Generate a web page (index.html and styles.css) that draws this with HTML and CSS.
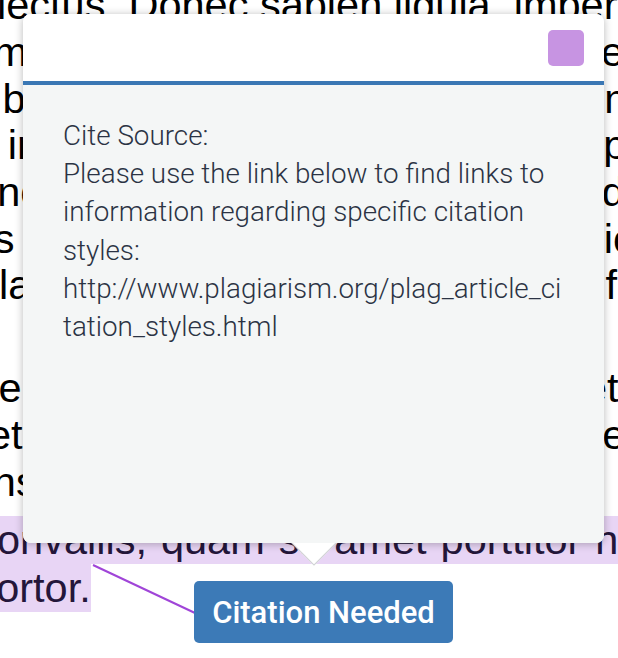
FILE: index.html
```html
<!DOCTYPE html>
<html>
<head>
<meta charset="utf-8">
<link rel="stylesheet" href="styles.css">
</head>
<body>
<div class="doc">
  <div class="ln"><span class="a a0">lectus. Donec sapien ligula, imperdiet</span></div>
  <div class="ln"><span class="a a1">mattis</span><span class="b b1">elit</span></div>
  <div class="ln"><span class="a a2">a bibendum</span><span class="b b2">mi</span></div>
  <div class="ln"><span class="a a3">quis in</span><span class="b b3">purus</span></div>
  <div class="ln"><span class="a a4">tincidunt</span><span class="b b4">dolor</span></div>
  <div class="ln"><span class="a a5">faucibus id</span><span class="b b5">dictum</span></div>
  <div class="ln"><span class="a a6">lacinia</span><span class="b b6">fringilla</span></div>
  <div class="ln gap"></div>
  <div class="ln"><span class="a a8">vitae</span><span class="b b8">et magna</span></div>
  <div class="ln"><span class="a a9">et</span><span class="b b9">eros</span></div>
  <div class="ln"><span class="a a10">consectetur</span></div>
  <div class="ln hl-line first"><span class="a a11 hl">convallis, quam sit amet porttitor nunc</span></div>
  <div class="ln hl-line"><span class="a a12 hl">tortor.</span></div>
</div>

<svg class="connector" width="618" height="658" viewBox="0 0 618 658">
  <line x1="93" y1="565" x2="195" y2="613" stroke="#a045d8" stroke-width="2"/>
</svg>

<button class="cite-btn" type="button">Citation Needed</button>

<div class="popup">
  <div class="popup-head"><span class="close-sq"></span></div>
  <div class="popup-body">
    <p class="msg">Cite Source:<br>Please use the link below to find links to information regarding specific citation styles:<br>http://www.plagiarism.org/plag_article_citation_styles.html</p>
  </div>
  <span class="arrow"></span>
</div>
</body>
</html>
```

FILE: styles.css
```css
html, body {
  margin: 0;
  padding: 0;
  background: #ffffff;
}
body {
  width: 618px;
  height: 658px;
  overflow: hidden;
  position: relative;
  font-family: "Liberation Sans", Arial, sans-serif;
}

/* background article text */
.doc {
  width: 618px;
  overflow: hidden;
  margin-top: -17.7px;
  font-size: 41.5px;
  line-height: 46.7px;
  color: #000;
}
.ln {
  display: flex;
  justify-content: space-between;
  white-space: nowrap;
  height: 46.7px;
}
.ln .a, .ln .b { flex-shrink: 0; }
.gap { height: 56.1px; }
.hl-line {
  height: 48px;
  line-height: 48px;
}
.hl-line.first { margin-top: 10.8px; }

.a0 { margin-left: -3px; }
.a1 { margin-left: -7px; }
.a2 { margin-left: -32px; }
.a3 { margin-left: -80px; }
.a4 { margin-left: -23.5px; }
.a5 { margin-left: -140px; }
.a6 { margin-left: -1px; }
.a8 { margin-left: -66px; }
.a9 { margin-left: -12px; }
.a10 { margin-left: -51px; }
.a11 { margin-left: -23.75px; word-spacing: 2.5px; }
.a12 { margin-left: -15.4px; }

.b1 { margin-right: -36px; }
.b2 { margin-right: -30px; }
.b3 { margin-right: -89px; }
.b4 { margin-right: -76px; }
.b5 { margin-right: -85px; }
.b6 { margin-right: -119px; }
.b8 { margin-right: -139px; }
.b9 { margin-right: -65px; }

.hl {
  background: #e8d5f5;
  color: #24163a;
}

/* connector */
.connector {
  position: absolute;
  left: 0;
  top: 0;
  pointer-events: none;
}

/* badge button */
.cite-btn {
  position: absolute;
  left: 194px;
  top: 581px;
  width: 259px;
  height: 62px;
  border: 0;
  border-radius: 5px;
  background: #3c7ab7;
  color: #ffffff;
  font-family: Roboto, "Noto Sans", sans-serif;
  font-weight: 500;
  font-size: 31px;
  padding: 0;
}

/* popup */
.popup {
  position: absolute;
  left: 23px;
  top: 14px;
  width: 581px;
  height: 529px;
  z-index: 2;
  display: flex;
  flex-direction: column;
  background: #f4f6f6;
  border-radius: 8px;
  box-shadow: 0 1px 8px rgba(0, 0, 0, 0.28);
}
.popup-head {
  height: 71px;
  background: #ffffff;
  border-bottom: 4px solid #3a77b4;
  border-radius: 8px 8px 0 0;
  display: flex;
  justify-content: flex-end;
  align-items: flex-start;
  padding: 16px 20px 0 0;
  box-sizing: border-box;
  flex-shrink: 0;
}
.close-sq {
  width: 36px;
  height: 36px;
  border-radius: 5px;
  background: #c794e2;
}
.popup-body {
  flex: 1;
  background: #f4f6f6;
  border-radius: 0 0 8px 8px;
  padding: 32px 34px 0 40px;
}
.msg {
  margin: 0;
  font-family: Roboto, "Noto Sans", sans-serif;
  font-weight: 300;
  font-size: 27.8px;
  line-height: 38.2px;
  color: #2b3344;
  overflow-wrap: break-word;
}
.arrow {
  position: absolute;
  left: 275px;
  top: 513px;
  width: 30px;
  height: 30px;
  background: #ffffff;
  border: 1px solid #cfd2d4;
  transform: rotate(45deg);
  z-index: -1;
}
```
